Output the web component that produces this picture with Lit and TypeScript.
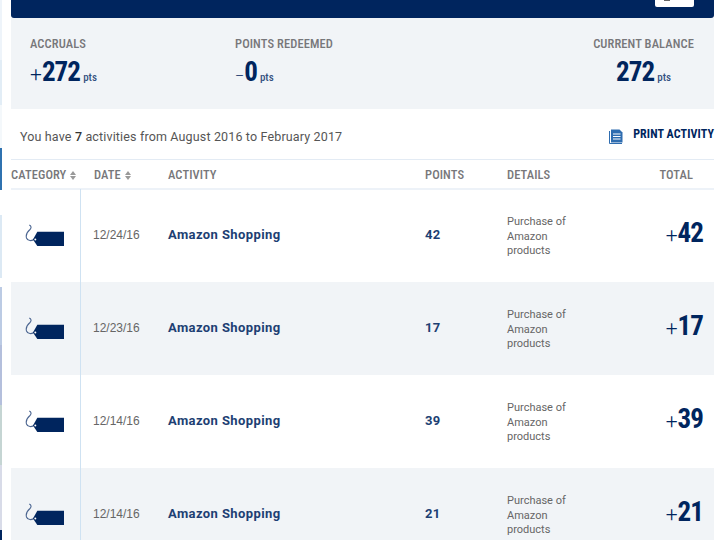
import { LitElement, html, css, svg } from 'lit';
import { customElement } from 'lit/decorators.js';

interface Row {
  date: string;
  points: number;
}

const ROWS: Row[] = [
  { date: '12/24/16', points: 42 },
  { date: '12/23/16', points: 17 },
  { date: '12/14/16', points: 39 },
  { date: '12/14/16', points: 21 },
];

// bits of whatever sits behind the page, showing at the left edge
const STRIP = [
  { h: 60, c: '#eef4fa' },
  { h: 45, c: '#e2edf6' },
  { h: 43, c: '#f4f8fb' },
  { h: 42, c: '#2f72b0' },
  { h: 25, c: '#ffffff' },
  { h: 63, c: '#dce9f4' },
  { h: 9, c: '#ffffff' },
  { h: 58, c: '#bccbe4' },
  { h: 60, c: '#b4bfdc' },
  { h: 60, c: '#c5d5d3' },
  { h: 65, c: '#d8dbe8' },
  { h: 10, c: '#00255e' },
];

const tagIcon = svg`
  <svg class="tag" width="42" height="24" viewBox="0 0 42 24">
    <path d="M4.3 1 C6.5 2 6.5 4 5 5.5 C2 8 0.5 10.5 1.5 14 C2.5 17 7 17.5 9.5 15" fill="none" stroke="#4a6490" stroke-width="1.1"/>
    <path d="M12.3 7.7 H39 V22 H12.3 L8 15.5 Z" fill="#00255e"/>
    <circle cx="10.3" cy="15.6" r="1" fill="#fff"/>
  </svg>
`;

const printIcon = svg`
  <svg width="14" height="15" viewBox="0 0 14 15">
    <path d="M0.5 2 V14.5 H13" fill="none" stroke="#2f6db0" stroke-width="1"/>
    <path d="M2 0.5 H10.5 L13.5 3.5 V13.5 H2 Z" fill="#2f6db0"/>
    <path d="M4 5 H11.5 M4 7.5 H11.5 M4 10 H11.5" stroke="#fff" stroke-width="1"/>
  </svg>
`;

@customElement('app-root')
export class AppRoot extends LitElement {
  static styles = css`
    :host {
      display: flex;
      width: 728px;
      height: 540px;
      overflow: hidden;
      background: #fff;
      font-family: Roboto, 'Liberation Sans', sans-serif;
      color: #555;
    }

    .strip {
      width: 2px;
      flex: none;
    }

    .page {
      margin-left: 9px;
      width: 703px;
    }

    .banner {
      height: 18px;
      background: #00255e;
      border-radius: 0 0 3px 3px;
      display: flex;
      justify-content: flex-end;
      padding-right: 20px;
    }

    .banner-btn {
      width: 39px;
      height: 7px;
      background: #fff;
      border-radius: 0 0 2px 2px;
      position: relative;
    }

    .banner-btn::after {
      content: '';
      position: absolute;
      left: 9px;
      top: 0;
      width: 6px;
      height: 1px;
      background: #666;
    }

    .summary {
      height: 91px;
      background: #f1f4f7;
      display: flex;
      box-sizing: border-box;
      padding: 19px 20px 0 19px;
    }

    .stat:nth-child(1) { width: 205px; }
    .stat:nth-child(2) { flex: 1; }
    .stat:nth-child(3) { text-align: center; }

    .label,
    .th {
      font-family: 'Roboto Condensed', 'Liberation Sans Narrow', Roboto, sans-serif;
      font-size: 12.5px;
      font-stretch: condensed;
      font-weight: 500;
      letter-spacing: 0.1px;
      color: #77777a;
    }

    .label {
      line-height: 14px;
    }

    .value {
      margin-top: 5px;
      height: 32px;
      display: flex;
      align-items: baseline;
      color: #00255e;
    }

    .stat:nth-child(3) .value {
      justify-content: center;
    }

    .sign {
      font-size: 21px;
      font-weight: 300;
    }

    .sign.minus {
      font-size: 14px;
    }

    .num {
      font-family: 'Roboto Condensed', 'Liberation Sans Narrow', Roboto, sans-serif;
      font-stretch: condensed;
      font-size: 27px;
      font-weight: 700;
      letter-spacing: -0.9px;
    }

    .pts {
      font-family: 'Roboto Condensed', 'Liberation Sans Narrow', Roboto, sans-serif;
      font-stretch: condensed;
      font-size: 11px;
      font-weight: 500;
      margin-left: 3px;
      color: #33507f;
    }

    .intro {
      height: 51px;
      display: flex;
      align-items: center;
      justify-content: space-between;
      font-size: 12.5px;
      padding: 4px 0 0 9px;
      border-bottom: 1px solid #e3ebf4;
      box-sizing: border-box;
      letter-spacing: 0.15px;
    }

    .intro b {
      font-weight: 500;
      color: #333;
    }

    .print {
      display: flex;
      align-items: center;
      gap: 10px;
      font-family: 'Roboto Condensed', 'Liberation Sans Narrow', Roboto, sans-serif;
      font-stretch: condensed;
      font-size: 12px;
      font-weight: 700;
      letter-spacing: 0.1px;
      color: #00255e;
    }

    .print svg {
      margin-top: 1px;
    }

    .print span {
      margin-top: -4px;
    }

    .grid {
      display: grid;
      grid-template-columns: 70px 87px 257px 82px 130px 1fr;
      align-items: center;
    }

    .head {
      height: 29px;
      padding-top: 1px;
      border-bottom: 1px solid #edf2f8;
      box-shadow: 0 1px 0 #edf2f8;
      box-sizing: border-box;
    }

    .sort {
      display: inline-flex;
      flex-direction: column;
      gap: 1px;
      vertical-align: middle;
      margin-left: 4px;
    }

    .sort i {
      width: 0;
      height: 0;
      border-left: 3px solid transparent;
      border-right: 3px solid transparent;
    }

    .sort i:first-child {
      border-bottom: 4px solid #999;
    }

    .sort i:last-child {
      border-top: 4px solid #999;
    }

    .th.date { padding-left: 13px; }
    .th.right { text-align: right; padding-right: 21px; }

    .row {
      height: 93px;
    }

    .row:nth-child(even) {
      background: #f1f4f7;
    }

    .cat {
      height: 100%;
      border-right: 1px solid #cfe2f2;
      display: flex;
      align-items: center;
      justify-content: center;
      box-sizing: border-box;
    }

    .tag {
      display: block;
      margin-left: 1px;
    }

    .date-cell {
      font-family: 'Liberation Sans', Arial, sans-serif;
      font-size: 12px;
      color: #666;
      padding: 0 0 2px 12px;
    }

    .activity {
      font-size: 13px;
      font-weight: 700;
      color: #1d3f73;
      letter-spacing: 0.4px;
      padding-bottom: 2px;
    }

    .points {
      font-size: 13px;
      font-weight: 700;
      letter-spacing: 0.3px;
      color: #1d3f73;
      padding-bottom: 2px;
    }

    .details {
      font-size: 11px;
      line-height: 14.7px;
      color: #666;
      width: 70px;
      padding-top: 3px;
    }

    .total {
      display: flex;
      justify-content: flex-end;
      align-items: baseline;
      padding: 0 11px 5px 0;
      color: #00255e;
    }
  `;

  render() {
    return html`
      <div class="strip">
        ${STRIP.map((s) => html`<div style="height:${s.h}px;background:${s.c}"></div>`)}
      </div>
      <div class="page">
        <div class="banner"><div class="banner-btn"></div></div>
        <div class="summary">
          <div class="stat">
            <div class="label">ACCRUALS</div>
            <div class="value"><span class="sign">+</span><span class="num">272</span><span class="pts">pts</span></div>
          </div>
          <div class="stat">
            <div class="label">POINTS REDEEMED</div>
            <div class="value"><span class="sign minus">–</span><span class="num">0</span><span class="pts">pts</span></div>
          </div>
          <div class="stat">
            <div class="label">CURRENT BALANCE</div>
            <div class="value"><span class="num">272</span><span class="pts">pts</span></div>
          </div>
        </div>
        <div class="intro">
          <span>You have <b>7</b> activities from August 2016 to February 2017</span>
          <div class="print">${printIcon}<span>PRINT ACTIVITY</span></div>
        </div>
        <div class="grid head">
          <div class="th">CATEGORY<span class="sort"><i></i><i></i></span></div>
          <div class="th date">DATE<span class="sort"><i></i><i></i></span></div>
          <div class="th">ACTIVITY</div>
          <div class="th">POINTS</div>
          <div class="th">DETAILS</div>
          <div class="th right">TOTAL</div>
        </div>
        <div class="rows">
          ${ROWS.map(
            (r) => html`
              <div class="grid row">
                <div class="cat">${tagIcon}</div>
                <div class="date-cell">${r.date}</div>
                <div class="activity">Amazon Shopping</div>
                <div class="points">${r.points}</div>
                <div class="details">Purchase of Amazon products</div>
                <div class="total"><span class="sign">+</span><span class="num">${r.points}</span></div>
              </div>
            `
          )}
        </div>
      </div>
    `;
  }
}
